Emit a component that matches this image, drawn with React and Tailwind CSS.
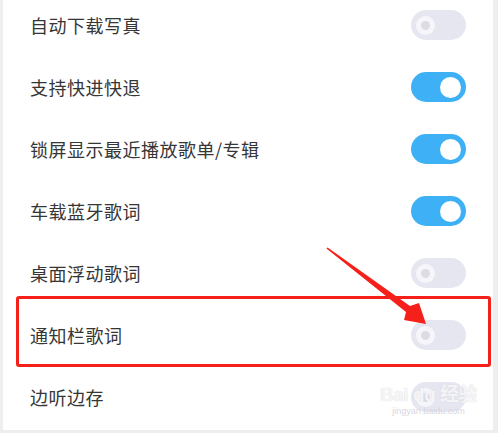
import { Fragment } from 'react'

const rows = [
  { label: '自动下载写真', on: false },
  { label: '支持快进快退', on: true },
  { label: '锁屏显示最近播放歌单/专辑', on: true },
  { label: '车载蓝牙歌词', on: true },
  { label: '桌面浮动歌词', on: false },
  { label: '通知栏歌词', on: false },
  { label: '边听边存', on: false },
]

function Toggle({ on }) {
  if (on) {
    return (
      <div className="w-[55px] h-[30px] rounded-full bg-[#3eb1f6] flex items-center justify-end pr-[5px]">
        <div className="w-[21px] h-[21px] rounded-full bg-white" />
      </div>
    )
  }
  return (
    <div className="w-[55px] h-[30px] rounded-full bg-[#e6e6f1] flex items-center pl-[5px]">
      <div className="w-[19px] h-[19px] rounded-full bg-[#f6f6fa] flex items-center justify-center">
        <div className="w-[9px] h-[9px] rounded-full bg-[#dcdce6]" />
      </div>
    </div>
  )
}

export default function App() {
  return (
    <div
      className="relative w-[498px] h-[433px] bg-[#eeeef1] overflow-hidden"
      style={{ fontFamily: '"Noto Sans CJK SC", "Noto Sans", sans-serif' }}
    >
      <div className="ml-[3px] mr-[5px] h-[430px] bg-white overflow-hidden">
        <div className="flex flex-col -mt-[6px]">
          {rows.map(r => (
            <div key={r.label} className="h-[62px] flex items-center justify-between pl-[27px] pr-[27px]">
              <span className="text-[18px] text-[#363636] tracking-[0.5px]">{r.label}</span>
              <Toggle on={r.on} />
            </div>
          ))}
        </div>
      </div>

      {/* annotation box */}
      <div className="absolute left-[16px] top-[296px] w-[475px] h-[71px] border-[3px] border-[#f5201a] rounded-[3px]" />

      {/* arrow */}
      <svg className="absolute left-0 top-0" width="498" height="433" viewBox="0 0 498 433">
        <path d="M326.4 248.6 L406 312 L404 320 L426 324 L419 303 L410 306 L327.6 247.4 Z" fill="#f5201a" />
      </svg>

      {/* watermark */}
      <div className="absolute left-[380px] top-[385px] flex flex-col items-center text-white/80 leading-none">
        <span className="text-[19px] font-bold tracking-tight whitespace-nowrap" style={{ fontFamily: '"Liberation Sans", "Noto Sans CJK SC", sans-serif', textShadow: '0 0 1px #c8c8d0' }}>Bai du 经验</span>
        <span className="text-[9px] mt-[3px] text-[#d8d8e0]" style={{ fontFamily: '"Liberation Sans", sans-serif' }}>jingyan.baidu.com</span>
      </div>
    </div>
  )
}
